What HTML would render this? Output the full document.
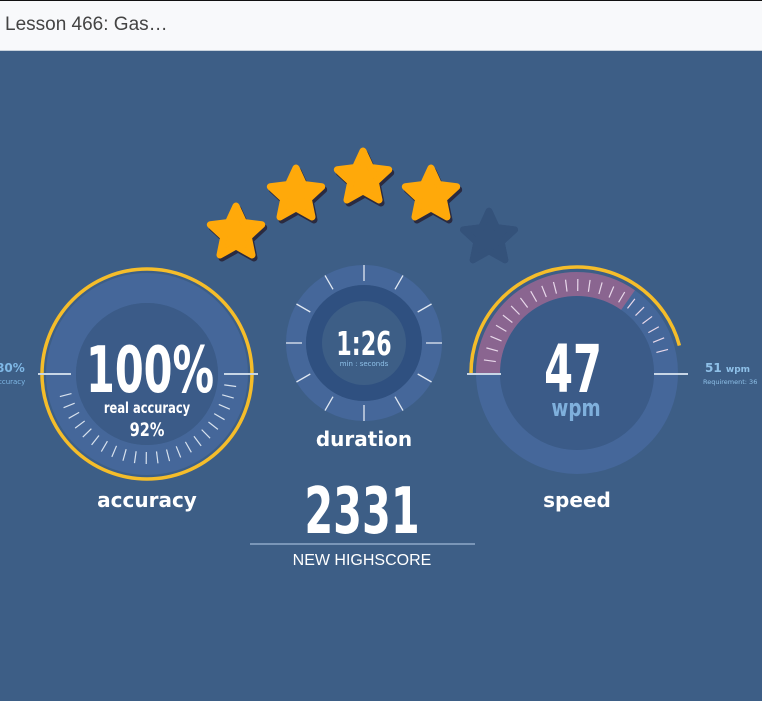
<!DOCTYPE html>
<html><head><meta charset="utf-8"><style>
body{margin:0;width:762px;height:701px;overflow:hidden;background:#3d5e86;font-family:"Liberation Sans",sans-serif}
.hd{position:absolute;left:0;top:0;width:762px;height:49px;background:#f8f9fb;border-top:1px solid #111;border-bottom:1px solid #c8d2dc}
.hd span{position:absolute;left:5px;top:13px;font-size:19px;color:#444}
svg{position:absolute;left:0;top:0}
.c{font-family:"DejaVu Sans Condensed","DejaVu Sans",sans-serif;font-weight:bold;fill:#fff}
.l{font-family:"DejaVu Sans","Liberation Sans",sans-serif;font-weight:bold;fill:#fff;font-size:20px}
</style></head><body>
<div class="hd"><span>Lesson 466: Gas…</span></div>
<svg width="762" height="701" id="s">
<defs>
<polygon id="st" points="0,-27 7.6,-10.5 25.7,-8.3 12.3,4 16,22 0,13 -16,22 -12.3,4 -25.7,-8.3 -7.6,-10.5" stroke-linejoin="round" stroke-width="7"/>
</defs>
<g fill="#ffa90a" stroke="#ffa90a">
<use href="#st" x="238" y="236" fill="#2a2a40" stroke="#2a2a40"/>
<use href="#st" x="236" y="233"/>
<use href="#st" x="298" y="198" fill="#2a2a40" stroke="#2a2a40"/>
<use href="#st" x="296" y="195"/>
<use href="#st" x="365" y="181" fill="#2a2a40" stroke="#2a2a40"/>
<use href="#st" x="363" y="178"/>
<use href="#st" x="433" y="198" fill="#2a2a40" stroke="#2a2a40"/>
<use href="#st" x="431" y="195"/>
</g>
<use href="#st" x="489" y="238" fill="#34527a" stroke="#4f6f9c" style="stroke-width:9"/>
<use href="#st" x="489" y="238" fill="#34527a" stroke="#34527a" style="stroke-width:5"/>
<!-- accuracy -->
<circle cx="147" cy="374" r="86" fill="none" stroke="#45679a" stroke-width="30"/>
<circle cx="147" cy="374" r="71" fill="#3b5b88"/>
<circle cx="147" cy="374" r="105" fill="none" stroke="#f5bd2a" stroke-width="3.5"/>
<line x1="38" y1="374" x2="71" y2="374" stroke="#c8d6e6" stroke-width="2"/>
<line x1="224" y1="374" x2="258" y2="374" stroke="#c8d6e6" stroke-width="2"/>
<g id="at" stroke="#d8e2ee" stroke-width="1.2"></g>
<text x="150" y="392" text-anchor="middle" class="c" font-size="64" transform="translate(150 0) scale(0.72 1) translate(-150 0)">100%</text>
<text x="147" y="413" text-anchor="middle" class="c" font-size="15" transform="translate(147 0) scale(0.85 1) translate(-147 0)">real accuracy</text>
<text x="147" y="436" text-anchor="middle" class="c" font-size="19" transform="translate(147 0) scale(0.85 1) translate(-147 0)">92%</text>
<text x="-4" y="372" fill="#7fb8e6" font-family="DejaVu Sans" font-size="12" font-weight="bold">80%</text>
<text x="-2" y="384" fill="#7fb8e6" font-family="DejaVu Sans" font-size="7">ccuracy</text>
<text x="147" y="507" text-anchor="middle" class="l">accuracy</text>
<!-- duration -->
<circle cx="364" cy="343" r="68" fill="none" stroke="#45679a" stroke-width="20"/>
<circle cx="364" cy="343" r="58" fill="#2f5080"/>
<circle cx="364" cy="343" r="42" fill="#3d5e86"/>
<g id="dt" stroke="#e0e8f2" stroke-width="1.3"></g>
<text x="364" y="355" text-anchor="middle" class="c" font-size="33" transform="translate(364 0) scale(0.75 1) translate(-364 0)">1:26</text>
<text x="364" y="366" text-anchor="middle" fill="#8ec0e8" font-family="DejaVu Sans" font-size="7">min : seconds</text>
<text x="364" y="446" text-anchor="middle" class="l">duration</text>
<!-- speed -->
<circle cx="577" cy="373" r="89" fill="none" stroke="#45679a" stroke-width="24"/>
<circle cx="577" cy="373" r="77" fill="#3b5b88"/>
<path id="pk" fill="none" stroke="#8a6590" stroke-width="24"/>
<path id="ya" fill="none" stroke="#f5bd2a" stroke-width="3.5"/>
<line x1="467" y1="374" x2="501" y2="374" stroke="#c8d6e6" stroke-width="2"/>
<line x1="654" y1="374" x2="688" y2="374" stroke="#c8d6e6" stroke-width="2"/>
<g id="sp" stroke="#e8d8ea" stroke-width="1.2"></g>
<text x="573" y="392" text-anchor="middle" class="c" font-size="66" transform="translate(573 0) scale(0.7 1) translate(-573 0)">47</text>
<text x="576" y="416" text-anchor="middle" class="c" style="fill:#7fb0dc" font-size="24" transform="translate(576 0) scale(0.85 1) translate(-576 0)">wpm</text>
<text x="705" y="372" fill="#8ec0e8" font-family="DejaVu Sans" font-size="12" font-weight="bold">51 <tspan font-size="9">wpm</tspan></text>
<text x="703" y="384" fill="#8ec0e8" font-family="DejaVu Sans" font-size="6.5">Requirement: 36</text>
<text x="577" y="507" text-anchor="middle" class="l">speed</text>
<!-- score -->
<text x="362" y="533" text-anchor="middle" class="c" font-size="64" transform="translate(362 0) scale(0.72 1) translate(-362 0)">2331</text>
<line x1="250" y1="544" x2="475" y2="544" stroke="#8ea8c8" stroke-width="1.5"/>
<text x="362" y="565" text-anchor="middle" fill="#fff" font-family="Liberation Sans" font-size="16">NEW HIGHSCORE</text>
</svg>
<script>
var NS="http://www.w3.org/2000/svg";
function ln(g,cx,cy,a,r1,r2){var e=document.createElementNS(NS,"line");var c=Math.cos(a*Math.PI/180),s=Math.sin(a*Math.PI/180);e.setAttribute("x1",cx+r1*c);e.setAttribute("y1",cy-r1*s);e.setAttribute("x2",cx+r2*c);e.setAttribute("y2",cy-r2*s);g.appendChild(e);}
var g=document.getElementById("at");for(var a=-8;a>=-172;a-=7.5)ln(g,147,374,a,78,90);
g=document.getElementById("dt");for(var a=0;a<360;a+=30)ln(g,364,343,a,62,78);
g=document.getElementById("sp");for(var a=172;a>=12;a-=7.5)ln(g,577,373,a,82,94);
function arc(cx,cy,r,a1,a2){var p=function(a){return (cx+r*Math.cos(a*Math.PI/180))+" "+(cy-r*Math.sin(a*Math.PI/180));};return "M"+p(a1)+" A"+r+" "+r+" 0 0 1 "+p(a2);}
document.getElementById("pk").setAttribute("d",arc(577,373,89,180,55));
document.getElementById("ya").setAttribute("d",arc(577,373,106,180,15));
</script>
</body></html>
